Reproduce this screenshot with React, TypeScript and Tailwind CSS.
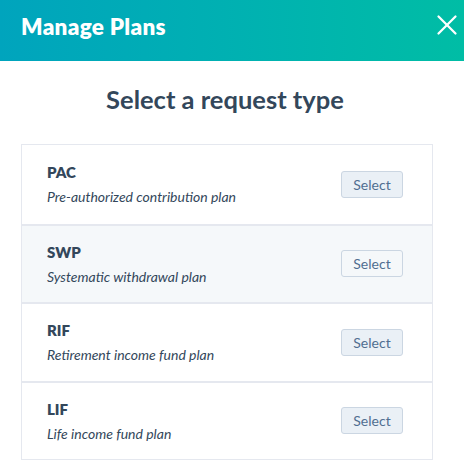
import { X } from "lucide-react";

const plans = [
  { code: "PAC", name: "Pre-authorized contribution plan" },
  { code: "SWP", name: "Systematic withdrawal plan", hover: true },
  { code: "RIF", name: "Retirement income fund plan" },
  { code: "LIF", name: "Life income fund plan" },
];

export default function App() {
  return (
    <div className="w-[464px] h-[476px] bg-white font-['Lato',sans-serif] overflow-hidden">
      <div className="h-[61px] bg-gradient-to-r from-[#00a4bd] to-[#00bda5] flex items-start justify-between pl-[21px]">
        <h1 className="mt-[12px] text-white text-[22.5px] leading-[30px] font-extrabold tracking-[0.3px]">
          Manage Plans
        </h1>
        <button className="mt-[8px] text-white">
          <X className="w-[34px] h-[34px]" strokeWidth={1.6} />
        </button>
      </div>

      <div className="w-[450px]">
        <h2 className="mt-[21px] text-center text-[#33475b] text-[25.5px] leading-[34px] font-bold">
          Select a request type
        </h2>

        <ul className="mt-[28px] ml-[21px] w-[412px] border border-[#e5e8ef]">
          {plans.map((p, i) => (
            <li
              key={p.code}
              className={`h-[78.5px] flex items-center justify-between pl-[25px] pr-[29px] ${
                i > 0 ? "border-t-2 border-[#e5e8ef]" : ""
              } ${p.hover ? "bg-[#f5f8fa]" : "bg-white"}`}
            >
              <div className="flex flex-col">
                <span className="text-[#33475b] text-[15px] font-extrabold leading-[20px]">{p.code}</span>
                <span className="mt-[6px] text-[#33475b] text-[14px] italic leading-[18px]">{p.name}</span>
              </div>
              <button
                className={`h-[27px] w-[62px] rounded-[3px] border border-[#cbd6e2] text-[#506e91] text-[14px] ${
                  p.hover ? "bg-[#f5f8fa]" : "bg-[#eaf0f6]"
                }`}
              >
                Select
              </button>
            </li>
          ))}
        </ul>
      </div>
    </div>
  );
}
